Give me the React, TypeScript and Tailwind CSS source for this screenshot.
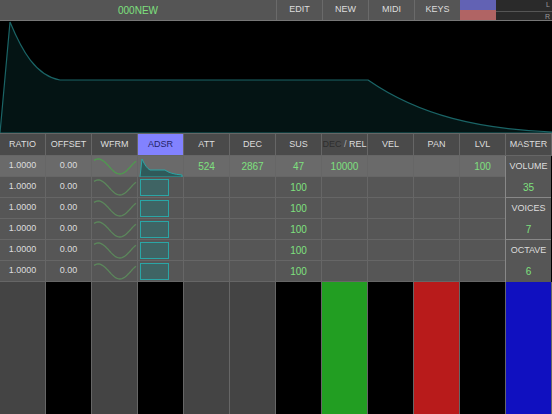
import React from "react";

const headers = ["RATIO", "OFFSET", "WFRM", "ADSR", "ATT", "DEC", "SUS", "DECREL", "VEL", "PAN", "LVL", "MASTER"];

function Sine({ bright }: { bright?: boolean }) {
  const pts: string[] = [];
  for (let i = 0; i <= 42; i++) {
    const x = 2 + i;
    const th = Math.PI * 0.3 + (i / 42) * Math.PI * 1.95;
    const y = 10.5 - 7.5 * Math.sin(th);
    pts.push(`${x.toFixed(1)},${y.toFixed(1)}`);
  }
  return (
    <svg width="46" height="21" className="block">
      <polyline points={pts.join(" ")} fill="none" stroke={bright ? "#4f9a4f" : "#5b875b"} strokeWidth="1.3" />
    </svg>
  );
}

function MiniEnv() {
  return (
    <svg width="46" height="21" className="block">
      <path d="M2 21 L4 3 Q8 12 12 14 L27 14 Q32 18 44 19 L44 21 Z" fill="#2f5a5a" stroke="#2aa6a6" strokeWidth="1" />
    </svg>
  );
}

function Box() {
  return (
    <svg width="46" height="21" className="block">
      <rect x="2.5" y="2.5" width="28" height="16" fill="#3f6464" stroke="#2aa6a6" strokeWidth="1" />
    </svg>
  );
}

function Cell({ children, className = "" }: { children?: React.ReactNode; className?: string }) {
  return (
    <div className={`w-[46px] h-[21px] flex items-center justify-center border-r border-b border-[#666] ${className}`}>
      {children}
    </div>
  );
}

export default function App() {
  const master = [
    { t: "VOLUME", g: false, line: false },
    { t: "35", g: true, line: true },
    { t: "VOICES", g: false, line: false },
    { t: "7", g: true, line: true },
    { t: "OCTAVE", g: false, line: false },
    { t: "6", g: true, line: false },
  ];
  const keys = ["#444444", "#000000", "#444444", "#000000", "#444444", "#444444", "#000000", "#229e22", "#000000", "#b81b1b", "#000000", "#1010c0"];
  return (
    <div className="w-[552px] h-[414px] bg-black overflow-hidden flex flex-col text-[9px] text-[#dddddd]" style={{ fontFamily: '"Liberation Sans", Arial, sans-serif' }}>
      {/* top bar */}
      <div className="h-[21px] flex bg-[#555555] border-b border-[#777]">
        <div className="w-[276px] flex items-center justify-center text-[#7ee07e] text-[10px]">000NEW</div>
        {["EDIT", "NEW", "MIDI", "KEYS"].map((b) => (
          <div key={b} className="w-[46px] flex items-center justify-center border-l border-[#6a6a6a]">{b}</div>
        ))}
        <div className="w-[36px] flex flex-col">
          <div className="flex-1 bg-[#6262b4]" />
          <div className="flex-1 bg-[#b06464]" />
        </div>
        <div className="flex-1 flex flex-col bg-[#2a2a2a] text-[7px] text-[#999]">
          <div className="flex-1 flex items-center justify-end pr-[2px] border-b border-[#555]">L</div>
          <div className="flex-1 flex items-center justify-end pr-[2px]">R</div>
        </div>
      </div>
      {/* envelope */}
      <div className="h-[112px] relative">
        <svg width="552" height="112" className="block">
          <path
            d="M0 112 L10 1 C22 30 36 55 60 59 L368 59 C420 95 480 108 552 111 L552 112 Z"
            fill="#041414"
            stroke="#1a6466"
            strokeWidth="1.2"
          />
        </svg>
      </div>
      {/* header */}
      <div className="flex h-[22px] bg-[#4a4a4a] border-t border-[#666]">
        {headers.map((h, i) => (
          <div
            key={h}
            className={`w-[46px] flex items-center justify-center border-r border-[#666] ${i === 3 ? "bg-[#8282ff] text-[#24246a]" : ""}`}
          >
            {h === "DECREL" ? (
              <span>
                <span className="text-[#2e2e2e]">DEC</span>
                <span className="text-[#aaa]"> / </span>
                <span>REL</span>
              </span>
            ) : (
              h
            )}
          </div>
        ))}
      </div>
      {/* rows */}
      <div className="flex border-t border-[#666]">
        <div className="flex flex-col">
          {[0, 1, 2, 3, 4, 5].map((r) => (
            <div key={r} className={`flex ${r === 0 ? "bg-[#6a6a6a]" : "bg-[#565656]"}`}>
              <Cell>1.0000</Cell>
              <Cell>0.00</Cell>
              <Cell><Sine bright={r === 0} /></Cell>
              <Cell>{r === 0 ? <MiniEnv /> : <Box />}</Cell>
              <Cell className="text-[#7ee07e] text-[10px]">{r === 0 ? "524" : ""}</Cell>
              <Cell className="text-[#7ee07e] text-[10px]">{r === 0 ? "2867" : ""}</Cell>
              <Cell className="text-[#7ee07e] text-[10px]">{r === 0 ? "47" : "100"}</Cell>
              <Cell className="text-[#7ee07e] text-[10px]">{r === 0 ? "10000" : ""}</Cell>
              <Cell />
              <Cell />
              <Cell className="text-[#7ee07e] text-[10px]">{r === 0 ? "100" : ""}</Cell>
            </div>
          ))}
        </div>
        <div className="w-[46px] flex flex-col bg-[#565656] border-l border-[#888] -ml-px">
          {master.map((m, i) => (
            <div
              key={i}
              className={`h-[21px] flex items-center justify-center ${m.g ? "text-[#7ee07e] text-[10px]" : ""} ${m.line ? "border-b border-[#888]" : ""}`}
            >
              {m.t}
            </div>
          ))}
        </div>
      </div>
      {/* keys */}
      <div className="flex flex-1">
        {keys.map((c, i) => (
          <div key={i} className="w-[46px] border-r border-[#666]" style={{ backgroundColor: c }} />
        ))}
      </div>
    </div>
  );
}
